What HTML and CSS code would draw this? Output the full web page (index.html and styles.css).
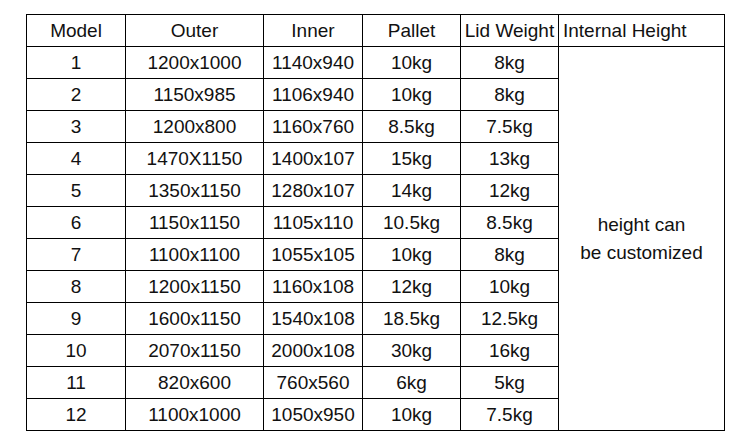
FILE: index.html
```html
<!DOCTYPE html>
<html>
<head>
<meta charset="utf-8">
<link rel="stylesheet" href="styles.css">
</head>
<body>
<table class="spec">
  <colgroup>
    <col class="c-model"><col class="c-outer"><col class="c-inner"><col class="c-pallet"><col class="c-lid"><col class="c-height">
  </colgroup>
  <tr><td>Model</td><td>Outer</td><td>Inner</td><td>Pallet</td><td>Lid Weight</td><td class="left">Internal Height</td></tr>
  <tr><td>1</td><td>1200x1000</td><td>1140x940</td><td>10kg</td><td>8kg</td><td class="merged" rowspan="12">height can<br>be customized</td></tr>
  <tr><td>2</td><td>1150x985</td><td>1106x940</td><td>10kg</td><td>8kg</td></tr>
  <tr><td>3</td><td>1200x800</td><td>1160x760</td><td>8.5kg</td><td>7.5kg</td></tr>
  <tr><td>4</td><td>1470X1150</td><td>1400x107</td><td>15kg</td><td>13kg</td></tr>
  <tr><td>5</td><td>1350x1150</td><td>1280x107</td><td>14kg</td><td>12kg</td></tr>
  <tr><td>6</td><td>1150x1150</td><td>1105x110</td><td>10.5kg</td><td>8.5kg</td></tr>
  <tr><td>7</td><td>1100x1100</td><td>1055x105</td><td>10kg</td><td>8kg</td></tr>
  <tr><td>8</td><td>1200x1150</td><td>1160x108</td><td>12kg</td><td>10kg</td></tr>
  <tr><td>9</td><td>1600x1150</td><td>1540x108</td><td>18.5kg</td><td>12.5kg</td></tr>
  <tr><td>10</td><td>2070x1150</td><td>2000x108</td><td>30kg</td><td>16kg</td></tr>
  <tr><td>11</td><td>820x600</td><td>760x560</td><td>6kg</td><td>5kg</td></tr>
  <tr><td>12</td><td>1100x1000</td><td>1050x950</td><td>10kg</td><td>7.5kg</td></tr>
</table>
</body>
</html>
```
FILE: styles.css
```css
html, body {
  margin: 0;
  padding: 0;
  background: #fff;
}
body {
  padding: 14px 0 0 26px;
  font-family: "Liberation Sans", Arial, sans-serif;
  color: #111;
}
.spec {
  border-collapse: collapse;
  table-layout: fixed;
  width: 698px;
  font-size: 19px;
}
.c-model { width: 99px; }
.c-outer { width: 138px; }
.c-inner { width: 99px; }
.c-pallet { width: 98px; }
.c-lid { width: 98px; }
.c-height { width: 166px; }
.spec td {
  border: 1px solid #000;
  height: 31px;
  padding: 0;
  text-align: center;
  vertical-align: middle;
  white-space: nowrap;
  line-height: 22px;
}
.spec td.left {
  text-align: left;
  padding-left: 4px;
}
.spec td.merged {
  line-height: 28px;
}
```
